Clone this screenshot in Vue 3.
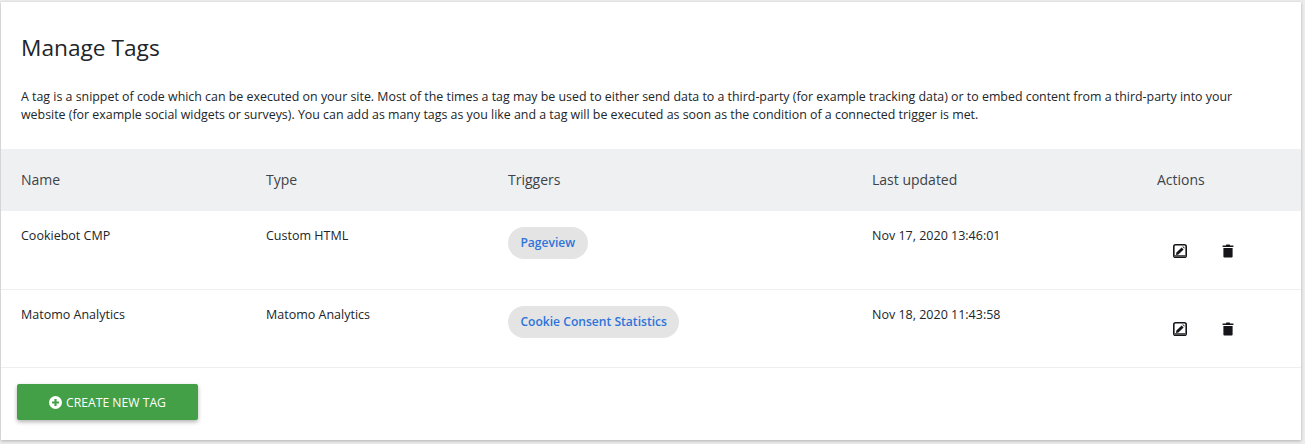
<script setup>
const rows = [
  { name: 'Cookiebot CMP', type: 'Custom HTML', trigger: 'Pageview', updated: 'Nov 17, 2020 13:46:01' },
  { name: 'Matomo Analytics', type: 'Matomo Analytics', trigger: 'Cookie Consent Statistics', updated: 'Nov 18, 2020 11:43:58' }
]
</script>

<template>
  <div class="page">
    <div class="card">
      <h2 class="title">Manage Tags</h2>
      <p class="intro">A tag is a snippet of code which can be executed on your site. Most of the times a tag may be used to either send data to a third-party (for example tracking data) or to embed content from a third-party into your website (for example social widgets or surveys). You can add as many tags as you like and a tag will be executed as soon as the condition of a connected trigger is met.</p>
      <div class="grid head">
        <div>Name</div>
        <div>Type</div>
        <div>Triggers</div>
        <div>Last updated</div>
        <div>Actions</div>
      </div>
      <div v-for="r in rows" :key="r.name" class="grid row">
        <div>{{ r.name }}</div>
        <div>{{ r.type }}</div>
        <div><span class="chip">{{ r.trigger }}</span></div>
        <div>{{ r.updated }}</div>
        <div class="actions">
          <svg class="ico" viewBox="0 0 14 14" width="14" height="14">
            <rect x="0.8" y="0.8" width="12.4" height="12.4" rx="1.8" fill="#fff" stroke="#15151a" stroke-width="1.6"/>
            <rect x="1" y="11" width="12" height="2" fill="#555"/>
            <path d="M3 11 L3.4 8.6 L8.6 3.4 L10.6 5.4 L5.4 10.6 Z" fill="#15151a"/>
            <path d="M9.4 2.8 L10 2.2 L11.8 4 L11.2 4.6 Z" fill="#15151a"/>
          </svg>
          <svg class="ico" viewBox="0 0 12 14" width="12" height="14">
            <path d="M4.4 0.4 H7.6 L8.2 1.4 H11.4 V3 H0.6 V1.4 H3.8 Z" fill="#15151a"/>
            <path d="M1.4 4 H10.6 V12.6 Q10.6 13.6 9.6 13.6 H2.4 Q1.4 13.6 1.4 12.6 Z" fill="#15151a"/>
          </svg>
        </div>
      </div>
      <div class="footer">
        <button class="create">
          <svg viewBox="0 0 12 12" width="13" height="13">
            <circle cx="6" cy="6" r="6" fill="#fff"/>
            <path d="M5 2.8 H7 V5 H9.2 V7 H7 V9.2 H5 V7 H2.8 V5 H5 Z" fill="#43a047"/>
          </svg>
          <span>CREATE NEW TAG</span>
        </button>
      </div>
    </div>
  </div>
</template>

<style>
html, body { margin: 0; background: #ececec; }
</style>

<style scoped>
.page {
  height: 444px;
  padding: 2px 4px 4px 1px;
  box-sizing: border-box;
  font-family: "Open Sans", "Noto Sans", sans-serif;
  color: #212529;
}
.card {
  height: 438px;
  background: #fff;
  box-shadow: 0 1px 3px rgba(0, 0, 0, 0.25);
  overflow: hidden;
}
.title {
  margin: 0;
  padding: 31px 20px 0;
  font-size: 22.7px;
  line-height: 30px;
  font-weight: 400;
}
.intro {
  margin: 0;
  padding: 25px 40px 0 20px;
  height: 61px;
  font-size: 12.4px;
  line-height: 18px;
}
.grid {
  display: grid;
  grid-template-columns: 245px 242px 364px 285px 1fr;
  padding-left: 20px;
}
.head {
  height: 62px;
  box-sizing: border-box;
  padding-bottom: 2px;
  align-items: center;
  background: #eff0f2;
  font-size: 14px;
  color: #3c4349;
}
.row {
  height: 78.5px;
  padding-top: 16px;
  box-sizing: border-box;
  font-size: 12.5px;
  line-height: 18px;
  border-bottom: 1px solid #eeeeee;
}
.chip {
  display: inline-block;
  padding: 0 12.4px;
  height: 32px;
  line-height: 32px;
  border-radius: 16px;
  background: #e4e4e4;
  color: #2d74da;
  font-size: 12.1px;
  font-weight: 600;
}
.actions {
  display: flex;
  gap: 35px;
  padding: 16.5px 0 0 16px;
}
.ico { display: block; }
.footer { padding: 16px 16px 0; }
.create {
  display: flex;
  align-items: center;
  justify-content: center;
  gap: 4px;
  width: 181px;
  height: 36px;
  padding: 0;
  border: 0;
  border-radius: 2px;
  background: #43a047;
  color: #fff;
  font-family: inherit;
  font-size: 12.2px;
  font-weight: 400;
  box-shadow: 0 2px 4px rgba(0, 0, 0, 0.3);
}
</style>
